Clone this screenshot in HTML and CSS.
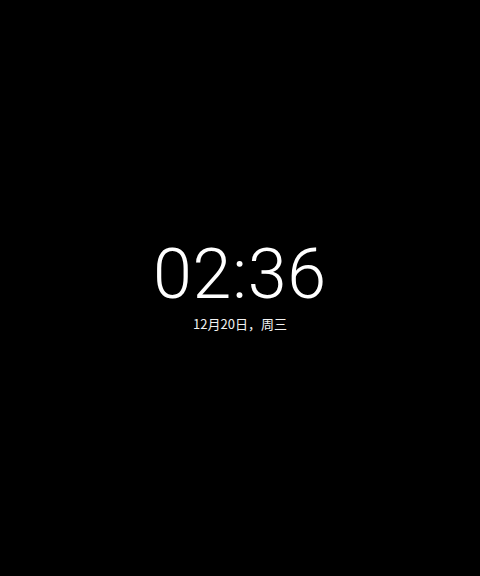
FILE: index.html
```html
<!DOCTYPE html>
<html lang="zh">
<head>
<meta charset="utf-8">
<link rel="stylesheet" href="styles.css">
</head>
<body>
<main class="screen">
  <div class="clock">
    <div class="time">02:36</div>
    <div class="date">12月20日，周三</div>
  </div>
</main>
</body>
</html>
```
FILE: styles.css
```css
html, body {
  margin: 0;
  padding: 0;
  background: #000;
}
.screen {
  width: 480px;
  height: 576px;
  display: flex;
  justify-content: center;
  padding-top: 234px;
  box-sizing: border-box;
}
.clock {
  display: flex;
  flex-direction: column;
  align-items: center;
  color: #fff;
}
.time {
  font-family: "Roboto", "Liberation Sans", sans-serif;
  font-weight: 300;
  font-size: 70px;
  line-height: 80px;
  letter-spacing: 0.8px;
}
.date {
  font-family: "Noto Sans CJK SC", "Noto Sans", sans-serif;
  font-size: 13px;
  line-height: 20px;
  color: #f2f2f2;
}
```
